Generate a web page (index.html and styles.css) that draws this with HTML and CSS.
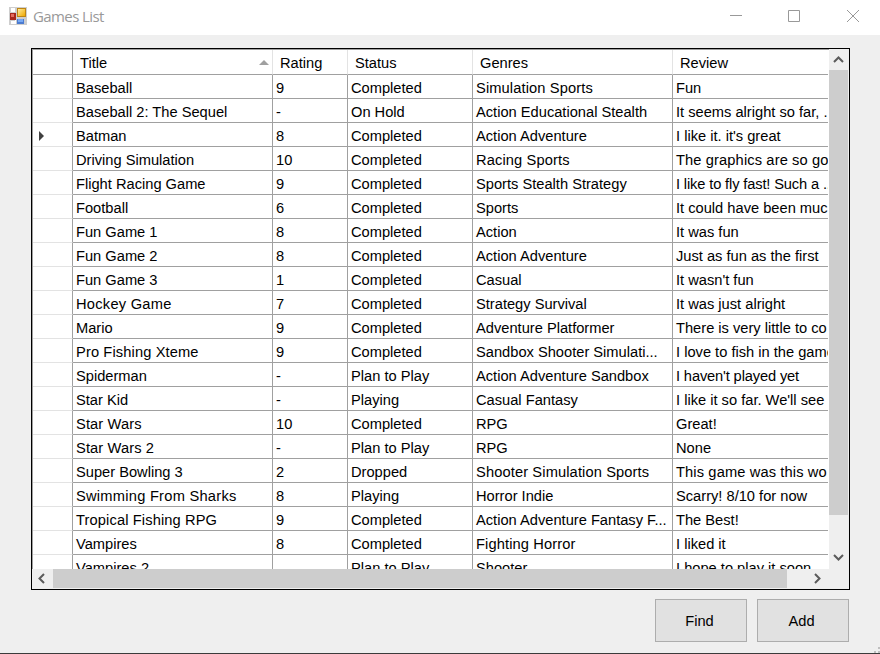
FILE: index.html
```
<!DOCTYPE html>
<html lang="en">
<head>
<meta charset="utf-8">
<title>Games List</title>
<link rel="stylesheet" href="styles.css">
</head>
<body>
<div class="window">
<header class="titlebar">
<svg class="app-icon" width="18" height="18" viewBox="0 0 18 18">
<defs><linearGradient id="y" x2="1" y2="1"><stop stop-color="#ffeb9c"/><stop offset="1" stop-color="#efa900"/></linearGradient></defs>
<path fill="#cecece" d="M0 0h18v18H0z"/><path fill="#fff" d="M2 1h4v4H2zM2 14h4v3H2zM6 13h1v4H6z"/>
<path fill="#bd8515" d="M8 1h9v9H8z"/><path fill="url(#y)" d="M9 2h7v7H9z"/>
<path fill="#a8281d" d="M1 6h6v7H1z"/><path fill="#e36d60" d="M2 7h3v3H2z"/>
<path fill="#4b7bd0" d="M8 12h7v5H8z"/><path fill="#77a9f4" d="M9 12h5v3H9z"/>
</svg>
<h1 class="caption">Games List</h1>
<svg class="controls" width="132" height="14" viewBox="0 0 132 14" fill="none" stroke="#999">
<path d="M0 6.5h12M58.5 1.5h11v11h-11z"/><path d="M117 1l12 12M129 1l-12 12"/>
</svg>
</header>
<main class="frame">
<div class="grid">
<div class="row head"><span></span><span class="sorted">Title<i class="sort"></i></span><span>Rating</span><span>Status</span><span>Genres</span><span>Review</span></div>
<div class="row"><span></span><span>Baseball</span><span>9</span><span>Completed</span><span class="loose">Simulation Sports</span><span>Fun</span></div>
<div class="row"><span></span><span>Baseball 2: The Sequel</span><span>-</span><span>On Hold</span><span>Action Educational Stealth</span><span>It seems alright so far, ...</span></div>
<div class="row"><span><i class="current"></i></span><span>Batman</span><span>8</span><span>Completed</span><span>Action Adventure</span><span>I like it. it's great</span></div>
<div class="row"><span></span><span>Driving Simulation</span><span>10</span><span>Completed</span><span class="loose">Racing Sports</span><span class="loose">The graphics are so go</span></div>
<div class="row"><span></span><span>Flight Racing Game</span><span>9</span><span>Completed</span><span>Sports Stealth Strategy</span><span class="tight">I like to fly fast! Such a ...</span></div>
<div class="row"><span></span><span>Football</span><span>6</span><span>Completed</span><span>Sports</span><span>It could have been muc</span></div>
<div class="row"><span></span><span>Fun Game 1</span><span>8</span><span>Completed</span><span>Action</span><span>It was fun</span></div>
<div class="row"><span></span><span>Fun Game 2</span><span>8</span><span>Completed</span><span>Action Adventure</span><span>Just as fun as the first</span></div>
<div class="row"><span></span><span>Fun Game 3</span><span>1</span><span>Completed</span><span>Casual</span><span>It wasn't fun</span></div>
<div class="row"><span></span><span class="looser">Hockey Game</span><span>7</span><span>Completed</span><span>Strategy Survival</span><span>It was just alright</span></div>
<div class="row"><span></span><span>Mario</span><span>9</span><span>Completed</span><span>Adventure Platformer</span><span>There is very little to co</span></div>
<div class="row"><span></span><span class="loose">Pro Fishing Xteme</span><span>9</span><span>Completed</span><span>Sandbox Shooter Simulati...</span><span>I love to fish in the game</span></div>
<div class="row"><span></span><span>Spiderman</span><span>-</span><span>Plan to Play</span><span>Action Adventure Sandbox</span><span class="tight">I haven't played yet</span></div>
<div class="row"><span></span><span>Star Kid</span><span>-</span><span>Playing</span><span>Casual Fantasy</span><span>I like it so far. We'll see</span></div>
<div class="row"><span></span><span class="loose">Star Wars</span><span>10</span><span>Completed</span><span>RPG</span><span>Great!</span></div>
<div class="row"><span></span><span class="loose">Star Wars 2</span><span>-</span><span>Plan to Play</span><span>RPG</span><span>None</span></div>
<div class="row"><span></span><span>Super Bowling 3</span><span>2</span><span>Dropped</span><span class="loose">Shooter Simulation Sports</span><span class="loose">This game was this wo</span></div>
<div class="row"><span></span><span class="looser">Swimming From Sharks</span><span>8</span><span>Playing</span><span>Horror Indie</span><span>Scarry! 8/10 for now</span></div>
<div class="row"><span></span><span class="loose">Tropical Fishing RPG</span><span>9</span><span>Completed</span><span>Action Adventure Fantasy F...</span><span>The Best!</span></div>
<div class="row"><span></span><span>Vampires</span><span>8</span><span>Completed</span><span class="loose">Fighting Horror</span><span>I liked it</span></div>
<div class="row"><span></span><span>Vampires 2</span><span></span><span>Plan to Play</span><span>Shooter</span><span>I hope to play it soon</span></div>
</div>
<div class="vscroll">
<svg width="20" height="21" viewBox="0 0 20 21"><path class="arrow" d="M5 13l4.500-4.500 4.500 4.500"/></svg>
<div class="vthumb"></div>
<svg class="down" width="20" height="21" viewBox="0 0 20 21"><path class="arrow" d="M5 7l4.500 4.500 4.500-4.500"/></svg>
</div>
<div class="hscroll">
<svg width="21" height="20" viewBox="0 0 21 20"><path class="arrow" d="M12 5l-4.500 4.500 4.500 4.500"/></svg>
<div class="hthumb"></div>
<svg class="right" width="21" height="20" viewBox="0 0 21 20"><path class="arrow" d="M7 5l4.500 4.500-4.500 4.500"/></svg>
</div>
</main>
<footer class="actions"><button>Find</button><button>Add</button></footer>
<svg class="grip" width="6" height="6" viewBox="0 0 6 6"><path fill="#bfbfbf" d="M4 0h2v2H4zM0 4h2v2H0zM4 4h2v2H4z"/></svg>
</div>
</body>
</html>
```
FILE: styles.css
```
* { box-sizing: border-box; }
body { margin: 0; overflow: hidden; font: 14.67px/18px "Liberation Sans", Arial, sans-serif; color: #000; }
.window { position: relative; height: 654px; background: #efefef; border-bottom: 1px solid #3b3b3b; }
.titlebar { height: 35px; background: #fff; display: flex; align-items: flex-start; padding: 7px 18px 0 9px; }
.caption { margin: -1px 0 0 6px; font: 15px/20px "Open Sans", sans-serif; letter-spacing: -.6px; color: #999; }
.controls { margin: 2px 0 0 auto; }
.frame { margin: 13px 30px 0 31px; height: 542px; border: 1px solid #000; display: grid; grid-template-columns: 797px 20px; grid-template-rows: 520px 20px; }
.grid { overflow: hidden; background: #fff; border-top: 1px solid #a0a0a0; border-left: 1px solid #a0a0a0; }
.row { display: grid; grid-template-columns: 40px 200px 75px 125px 200px 155px; height: 24px; }
.row span { height: 24px; padding: 4px 0 0 3px; white-space: nowrap; overflow: hidden; border-right: 1px solid #a0a0a0; border-bottom: 1px solid #a0a0a0; }
.row span:first-child { border-bottom-color: #e3e3e3; padding-left: 6px; }
.row span:last-child { border-right: 0; }
.row .loose { letter-spacing: .12px; }
.row .looser { letter-spacing: .25px; }
.row .tight { letter-spacing: -.14px; }
.head { height: 25px; }
.head span { height: 25px; padding: 4px 0 0 7px; border-right-color: #e3e3e3; }
.row.head span:first-child { border-color: #a0a0a0; }
.head .sorted { display: flex; justify-content: space-between; padding-right: 3px; }
.sort { margin-top: 6px; border: solid transparent; border-width: 0 5px 5px; border-bottom-color: #a0a0a0; height: 0; }
.current { display: block; margin-top: 4px; width: 0; border: solid transparent; border-width: 5px 0 5px 5px; border-left-color: #404040; }
.vscroll, .hscroll { display: flex; background: #efefef; }
.vscroll { flex-direction: column; }
.vthumb { width: 19px; height: 445px; background: #cdcdcd; }
.down { margin-top: auto; }
.hthumb { width: 734px; height: 19px; background: #cdcdcd; }
.right { margin-left: auto; }
.hscroll { width: 797px; }
.arrow { fill: none; stroke: #5b5b5b; stroke-width: 2; }
.actions { display: flex; justify-content: flex-end; gap: 10px; padding: 9px 31px 0 0; }
.actions button { width: 92px; height: 43px; border: 1px solid #adadad; background: #e1e1e1; color: #000; font: inherit; padding: 0 3px 0 0; }
.grip { position: absolute; right: 0; bottom: 0; }
```
